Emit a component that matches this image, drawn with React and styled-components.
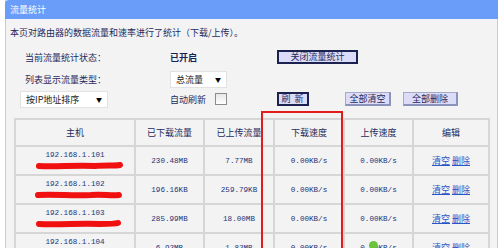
import styled, { createGlobalStyle } from "styled-components";

const CN = `"Noto Sans CJK SC", "Noto Sans", sans-serif`;
const MONO = `"Liberation Mono", "DejaVu Sans Mono", monospace`;

const GlobalStyle = createGlobalStyle`
    html, body {
        margin: 0;
        padding: 0;
        background: #ffffff;
        overflow: hidden;
    }
`;

const hosts = [
    { ip: "192.168.1.101", down: "230.48MB", up: "7.77MB", scrib: "M4 4 C20 5 40 3 60 4 C70 3 80 4 85 3" },
    { ip: "192.168.1.102", down: "196.16KB", up: "259.79KB", scrib: "M3 4 C20 3 38 5 56 4 C68 3 76 5 84 4" },
    { ip: "192.168.1.103", down: "285.99MB", up: "18.00MB", scrib: "M4 4 C25 5 45 3 65 4 C74 4 80 4 83 3" },
    { ip: "192.168.1.104", down: "6.92MB", up: "1.82MB", scrib: null },
];

const columns = [
    { title: "主机", w: 120 },
    { title: "已下载流量", w: 69 },
    { title: "已上传流量", w: 70 },
    { title: "下载速度", w: 70 },
    { title: "上传速度", w: 69 },
    { title: "编辑", w: 76 },
];

const App = () => {
    return (
        <>
            <GlobalStyle />
            <Page>
                <Panel>
                    <TitleBar>流量统计</TitleBar>
                    <Intro>本页对路由器的数据流量和速率进行了统计（下载/上传）。</Intro>

                    <Form>
                        <Label>当前流量统计状态：</Label>
                        <Status>已开启</Status>
                        <Actions>
                            <Button $dark $w={81}>关闭流量统计</Button>
                        </Actions>

                        <Label>列表显示流量类型：</Label>
                        <div>
                            <Select $width={57}>总流量<Arrow>▼</Arrow></Select>
                        </div>
                        <div />

                        <div>
                            <Select $width={88}>按IP地址排序<Arrow>▼</Arrow></Select>
                        </div>
                        <Label $plain>
                            自动刷新<Check />
                        </Label>
                        <Actions>
                            <Button $dark $w={32} $spaced>刷 新</Button>
                            <Button $w={46} style={{ marginLeft: 36 }}>全部清空</Button>
                            <Button $w={55} style={{ marginLeft: 12 }}>全部删除</Button>
                        </Actions>
                    </Form>

                    <Table>
                        <colgroup>
                            {columns.map((c) => (
                                <col key={c.title} style={{ width: c.w }} />
                            ))}
                        </colgroup>
                        <thead>
                            <HeadRow>
                                {columns.map((c) => (
                                    <Th key={c.title}>{c.title}</Th>
                                ))}
                            </HeadRow>
                        </thead>
                        <tbody>
                            {hosts.map((h) => (
                                <Row key={h.ip}>
                                    <HostCell>
                                        <Ip>{h.ip}</Ip>
                                        {h.scrib && (
                                            <Scribble viewBox="0 0 88 8" width="88" height="8">
                                                <path d={h.scrib} stroke="#f01010" strokeWidth="6" fill="none" strokeLinecap="round" />
                                            </Scribble>
                                        )}
                                    </HostCell>
                                    <Td>{h.down}</Td>
                                    <Td>{h.up}</Td>
                                    <Td>0.00KB/s</Td>
                                    <Td>0.00KB/s</Td>
                                    <EditCell>
                                        <Link>清空</Link> <Link>删除</Link>
                                    </EditCell>
                                </Row>
                            ))}
                        </tbody>
                    </Table>
                </Panel>

                <Highlight />
                <Dot />
            </Page>
        </>
    );
};

const Page = styled.div`
    position: relative;
    width: 501px;
    height: 248px;
    overflow: hidden;
`;

const Panel = styled.div`
    margin-left: 5px;
    width: 491px;
    height: 260px;
    background: #f3f3f3;
    border-left: 1px solid #f3c290;
    border-right: 1px solid #f3c290;
`;

const TitleBar = styled.div`
    height: 19px;
    margin: 0 -1px;
    padding-left: 5px;
    background: #6a9cf9;
    border-top-left-radius: 4px;
    color: #ffffff;
    font-family: ${CN};
    font-size: 9px;
    line-height: 19px;
`;

const Intro = styled.div`
    margin-top: 8px;
    padding-left: 4px;
    font-family: ${CN};
    font-size: 9px;
    line-height: 12px;
    color: #1e2a5c;
`;

const Form = styled.div`
    display: grid;
    grid-template-columns: 150px 107px 1fr;
    grid-template-rows: 22px 22px 18px;
    align-items: center;
    margin: 7px 0 0 14px;
    font-family: ${CN};
    font-size: 9px;
    color: #1e2a5c;
`;

const Label = styled.div`
    display: flex;
    align-items: center;
    padding-left: ${({ $plain }) => ($plain ? "0" : "5px")};
`;

const Status = styled.div`
    font-weight: bold;
    color: #16235a;
`;

const Actions = styled.div`
    display: flex;
    align-items: center;
`;

const Button = styled.button`
    box-sizing: border-box;
    width: ${({ $w }) => $w}px;
    height: 14px;
    padding: 0;
    background: #dcdcf8;
    border: ${({ $dark }) => ($dark ? "2px solid #1c2250" : "1px solid #a4aac8")};
    border-right: 2px solid ${({ $dark }) => ($dark ? "#1c2250" : "#8a93b9")};
    border-bottom: 2px solid ${({ $dark }) => ($dark ? "#1c2250" : "#8a93b9")};
    font-family: ${CN};
    font-size: 9px;
    line-height: 10px;
    color: #1e2a5c;
    letter-spacing: ${({ $spaced }) => ($spaced ? "1px" : "0")};
    white-space: nowrap;
    cursor: pointer;
`;

const Select = styled.div`
    display: flex;
    align-items: center;
    justify-content: space-between;
    box-sizing: border-box;
    width: ${({ $width }) => $width}px;
    height: 17px;
    padding: 0 5px;
    background: #ffffff;
    border: 1px solid #e2e2e2;
    color: #1a1a1a;
`;

const Arrow = styled.span`
    font-size: 6px;
    color: #000;
`;

const Check = styled.span`
    display: inline-block;
    width: 10px;
    height: 10px;
    margin-left: 9px;
    background: linear-gradient(#e6e6e6, #ffffff);
    border: 1px solid #8c8c8c;
`;

const Table = styled.table`
    table-layout: fixed;
    width: 474px;
    margin: 10px 0 0 8px;
    border-collapse: collapse;
    border: 2px solid #d6d6d6;
    font-family: ${CN};
    font-size: 9px;
    color: #1e2a5c;
`;

const HeadRow = styled.tr`
    height: 27px;
`;

const Row = styled.tr`
    height: 29px;
`;

const Th = styled.th`
    padding: 0;
    font-weight: normal;
    border: 2px solid #d6d6d6;
    text-align: center;
    line-height: 12px;
`;

const Td = styled.td`
    padding: 0;
    border: 2px solid #d6d6d6;
    text-align: center;
    font-family: ${MONO};
    font-size: 7.6px;
    line-height: 10px;
    color: #243478;
`;

const EditCell = styled(Td)`
    font-family: ${CN};
    font-size: 9px;
    line-height: 12px;
`;

const HostCell = styled(Td)`
    vertical-align: top;
    padding-top: 3px;
`;

const Ip = styled.div`
    height: 10px;
`;

const Scribble = styled.svg`
    display: block;
    margin: 2px 0 0 19px;
`;

const Link = styled.a`
    color: #2a55c8;
    text-decoration: underline;
    cursor: pointer;
`;

const Highlight = styled.div`
    position: absolute;
    left: 261px;
    top: 111px;
    width: 78px;
    height: 160px;
    border: 2px solid #e41b1b;
`;

const Dot = styled.div`
    position: absolute;
    left: 369px;
    top: 241px;
    width: 9px;
    height: 9px;
    border-radius: 50%;
    background: #6cc43a;
`;

export default App;
